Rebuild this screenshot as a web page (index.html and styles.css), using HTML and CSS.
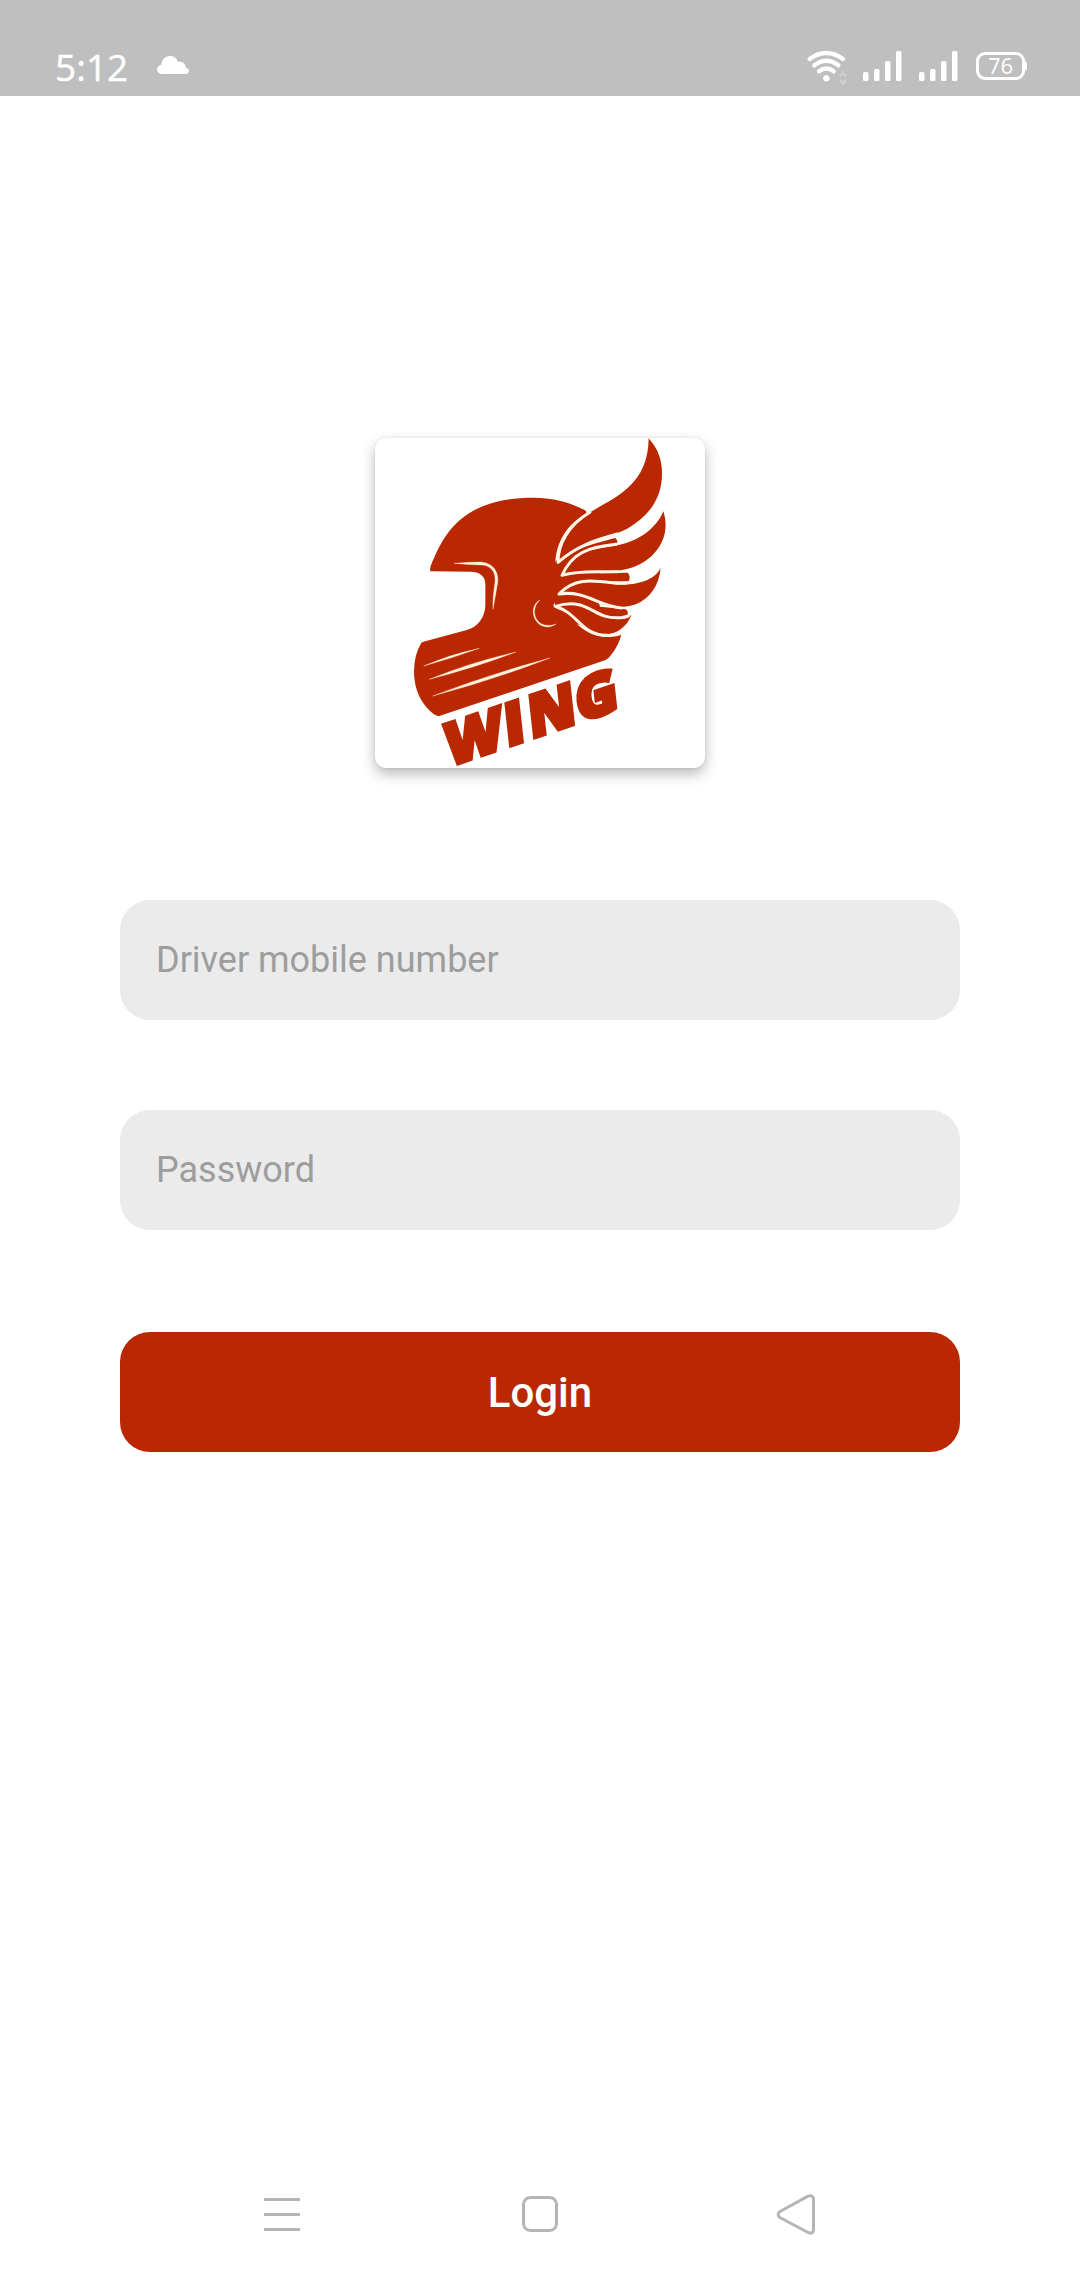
FILE: index.html
```
<!DOCTYPE html>
<html lang="en">
  <head>
    <meta charset="utf-8" />
    <title>Wing Driver - Login</title>
    <meta name="viewport" content="width=device-width, initial-scale=1" />
    <link rel="stylesheet" href="styles.css">
  </head>
  <body>
    <header class="status-bar">
      <span class="time">5:12</span>
      <svg class="cloud" width="32" height="18" viewBox="0 0 96 54">
        <path d="M14 54C5 54 0 48 0 40C0 33 5 28 13 26C15 10 26 0 40 0C51 0 59 7 63 18C76 15 86 24 87 36C93 37 96 41 96 45C96 50 92 54 87 54Z" />
      </svg>
      <div class="status-icons">
        <svg class="wifi" width="42" height="32" viewBox="0 0 126 96">
          <g class="wifi-arcs">
            <path d="M8 24Q58 -12 108 24" />
            <path d="M22 43Q58 15 94 43" />
            <path d="M36 61Q58 44 80 61" />
          </g>
          <circle cx="58" cy="82" r="9.500" />
          <path class="wifi-data" d="M99 76L108 65L117 76M99 86L108 97L117 86" />
        </svg>
        <svg class="signal" width="39" height="30" viewBox="0 0 39 30">
          <rect x="0" y="21" width="5.500" height="9" rx="1.500" />
          <rect x="11" y="18" width="5.500" height="12" rx="1.500" />
          <rect x="22" y="10" width="5.500" height="20" rx="1.500" />
          <rect x="33" y="0" width="5.500" height="30" rx="1.500" />
        </svg>
        <svg class="signal" width="39" height="30" viewBox="0 0 39 30">
          <rect x="0" y="21" width="5.500" height="9" rx="1.500" />
          <rect x="11" y="18" width="5.500" height="12" rx="1.500" />
          <rect x="22" y="10" width="5.500" height="20" rx="1.500" />
          <rect x="33" y="0" width="5.500" height="30" rx="1.500" />
        </svg>
        <div class="battery">76</div>
      </div>
    </header>

    <main>
      <svg class="logo" viewBox="45 54 990 990">
        <!-- helmet -->
        <path d="M211 454Q209 445 213 436C252 338 311 233 520 233C585 233 637 250 677 272Q681 276 678 281C620 314 591 363 586 425Q589 435 598 431L602 460Q602 470 612 470L595 514Q588 524 600 529L582 552Q576 560 590 565C640 592 670 651 740 651Q768 650 786 637Q776 680 750 709Q746 716 735 721L238 888Q230 889 222 883C175 846 162 796 162 753Q162 705 184 668L190 665L318 631C355 622 376 589 376 555V492C376 468 358 455 332 455Z" />
        <path d="M586 425L602 405L700 372L765 354Q774 360 771 371L700 382L720 460L803 458Q813 468 806 484L700 486L720 560L797 568Q807 575 802 585L740 640L640 610L585 555Z" />
        <!-- feathers -->
        <g class="feather">
          <path d="M866 55C894 86 906 120 906 161C906 232 870 287 800 327C760 349 680 352 594 427C594 374 624 316 690 277C760 234 865 198 866 55Z" />
          <path d="M910 274C930 335 905 390 855 424C780 474 700 440 606 466C636 400 680 390 760 378C820 370 885 335 910 274Z" />
          <path d="M902 443C898 495 870 535 828 553C728 586 697 507 597 522C641 475 690 480 756 491C820 501 885 482 902 443Z" />
          <path d="M815 585C798 622 772 641 738 643C660 643 655 579 586 559C690 528 695 601 782 596Q802 595 815 585Z" />
        </g>
        <g class="cut">
          <path d="M771 342C728 356 663 367 594 427C594 374 624 316 690 277" />
          <path d="M774 455C722 458 667 449 606 466C636 400 680 382 768 373" />
          <path d="M785 564C713 558 677 510 597 522C641 475 690 480 756 488Q785 491 804 488" />
          <path d="M785 639C767 648 752 647 738 646C660 643 655 579 586 559C690 528 695 601 782 593Q794 592 805 588" />
        </g>
        <!-- highlights -->
        <g class="shine">
          <path d="M282 430Q330 426 365 426C402 430 418 460 413 489L399 568Q397 540 405 487C409 452 388 435 364 435Q330 435 282 430Z" />
          <path d="M540 540C511 565 522 615 563 616Q575 617 588 612C570 625 546 624 531 606C512 583 518 550 540 540Z" />
          <path d="M191 738Q272 703 358 685Q278 714 191 738Z" />
          <path d="M208 778Q335 726 468 696Q348 742 208 778Z" />
          <path d="M218 828Q390 762 570 714Q400 779 218 828Z" />
        </g>
        <text class="logo-text" transform="matrix(.972 -.329 .112 1.018 263 1047)"><tspan x="0" y="-6">W</tspan><tspan x="183">I</tspan><tspan x="257">N</tspan><tspan x="403">G</tspan></text>
      </svg>

      <form class="login-form">
        <input type="tel" name="mobile" placeholder="Driver mobile number" />
        <input type="password" name="password" placeholder="Password" />
        <button type="submit">Login</button>
      </form>
    </main>

    <nav class="nav-bar">
      <svg width="40" height="42" viewBox="0 0 40 42">
        <path d="M2 6.500H38M2 21.500H38M2 36.500H38" />
      </svg>
      <svg width="40" height="42" viewBox="0 0 40 42">
        <rect x="3.500" y="4.500" width="33" height="33" rx="7" />
      </svg>
      <svg width="40" height="42" viewBox="0 0 40 42">
        <path d="M2 18.500L30 3.200Q35 1.500 35.500 6V37Q35 41.500 30 39.500L2 24.500Q-2 21.500 2 18.500Z" />
      </svg>
    </nav>
  </body>
</html>
```

FILE: styles.css
```
* {
  box-sizing: border-box;
}
body {
  margin: 0;
  height: 2280px;
  display: flex;
  flex-direction: column;
  background-color: white;
  font-family: Roboto, sans-serif;
}
svg {
  overflow: visible;
}
.status-bar {
  height: 96px;
  padding: 40px 53px 0 55px;
  display: flex;
  align-items: flex-start;
  background-color: #bfbfbf;
  color: white;
  fill: white;
  font-family: "Open Sans", sans-serif;
}
.time {
  width: 102px;
  font-size: 37px;
  line-height: 54px;
  -webkit-text-stroke: 0.4px white;
}
.cloud {
  margin-top: 16px;
}
.status-icons {
  display: flex;
  margin-left: auto;
  padding-top: 11px;
}
.wifi {
  margin-right: 14px;
}
.wifi-arcs {
  fill: none;
  stroke: white;
  stroke-width: 13;
  stroke-linecap: round;
}
.wifi-data {
  fill: none;
  stroke: #cfcfcf;
  stroke-width: 7;
}
.signal {
  margin-right: 17px;
}
.battery {
  position: relative;
  width: 49px;
  height: 28px;
  margin: 1px 2px 0 1px;
  border: 3px solid white;
  border-radius: 9px;
  font-size: 22px;
  line-height: 21px;
  text-align: center;
}
.battery::after {
  content: "";
  position: absolute;
  top: 6px;
  right: -5px;
  width: 3px;
  height: 10px;
  border-radius: 0 3px 3px 0;
  background-color: white;
}
main {
  flex: 1;
  display: flex;
  flex-direction: column;
  align-items: center;
  padding-top: 342px;
}
.logo {
  width: 330px;
  height: 330px;
  border-radius: 11px;
  background-color: white;
  fill: #b92800;
  box-shadow: 0 6px 14px rgba(0, 0, 0, 0.28), 0 0 3px rgba(0, 0, 0, 0.08);
}
.cut {
  fill: none;
  stroke: #fff6e8;
  stroke-width: 9;
  stroke-linecap: round;
  stroke-linejoin: round;
}
.shine {
  fill: #fff3dc;
  stroke: #fff3dc;
  stroke-width: 1;
}
.logo-text {
  font-family: "Open Sans", sans-serif;
  font-size: 172px;
  font-weight: 800;
  stroke: #b92800;
  stroke-width: 12;
}
.login-form {
  width: 840px;
  margin-top: 132px;
  display: flex;
  flex-direction: column;
}
.login-form input,
.login-form button {
  height: 120px;
  border: none;
  border-radius: 30px;
  font-family: inherit;
}
.login-form input {
  margin-bottom: 90px;
  padding: 0 36px;
  background-color: #ebebeb;
  font-size: 36px;
}
.login-form input::placeholder {
  color: #9d9d9d;
}
.login-form button {
  margin-top: 12px;
  background-color: #b92800;
  color: white;
  font-size: 42px;
  font-weight: 500;
}
.nav-bar {
  display: flex;
  justify-content: space-between;
  padding: 0 262px 45px;
  fill: none;
  stroke: #b5b5b5;
  stroke-width: 3;
}
```
